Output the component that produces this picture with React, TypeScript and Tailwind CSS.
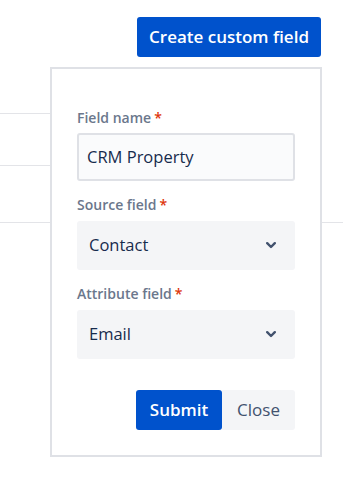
const Chevron = () => (
  <svg width="10" height="7" viewBox="0 0 10 7" fill="none">
    <path d="M1.2 1.2 L5 5 L8.8 1.2" stroke="#42526E" strokeWidth="2.4" strokeLinecap="round" strokeLinejoin="round" />
  </svg>
);

const Label = ({ text }: { text: string }) => (
  <div className="h-[20px] leading-[20px] text-[14px] font-semibold text-[#6b778c] flex">
    {text}
    <span className="ml-[3px] text-[#de350b]">*</span>
  </div>
);

const Select = ({ value }: { value: string }) => (
  <div className="h-[49px] rounded-[3px] bg-[#f4f5f7] flex items-center justify-between pl-[12px] pr-[19px] text-[16.5px] text-[#172b4d]">
    <span>{value}</span>
    <Chevron />
  </div>
);

export default function App() {
  return (
    <div
      className="relative w-[343px] h-[487px] bg-white overflow-hidden"
      style={{ fontFamily: '"Open Sans", "Noto Sans", sans-serif' }}
    >
      <div className="flex justify-end pt-[17px] pr-[22px]">
        <button className="h-[40px] w-[184px] rounded-[3px] bg-[#0052cc] text-white text-[17px] font-semibold">
          Create custom field
        </button>
      </div>

      {/* table rows behind the popup */}
      <div className="mt-[56px] w-[200px] border-t border-[#e3e4e8]" />
      <div className="mt-[51px] w-[200px] border-t border-[#e3e4e8]" />
      <div className="mt-[56px] w-full border-t border-[#e3e4e8]" />

      <div className="absolute left-[50px] top-[67px] w-[272px] h-[390px] border-2 border-[#dfe1e6] bg-white px-[25px] pt-[39px]">
        <Label text="Field name" />
        <div className="mt-[5px] h-[48px] rounded-[3px] border-2 border-[#dfe1e6] bg-[#fafbfc] flex items-center pl-[8px] text-[16.5px] text-[#172b4d]">
          CRM Property
        </div>

        <div className="mt-[14px]">
          <Label text="Source field" />
        </div>
        <div className="mt-[6px]">
          <Select value="Contact" />
        </div>

        <div className="mt-[14px]">
          <Label text="Attribute field" />
        </div>
        <div className="mt-[6px]">
          <Select value="Email" />
        </div>

        <div className="mt-[31px] flex justify-end">
          <button className="h-[40px] w-[86px] rounded-[3px] bg-[#0052cc] text-white text-[17px] font-semibold">
            Submit
          </button>
          <button className="h-[40px] w-[73px] rounded-r-[3px] bg-[#f4f5f7] text-[#42526e] text-[17px] font-medium">
            Close
          </button>
        </div>
      </div>
    </div>
  );
}
